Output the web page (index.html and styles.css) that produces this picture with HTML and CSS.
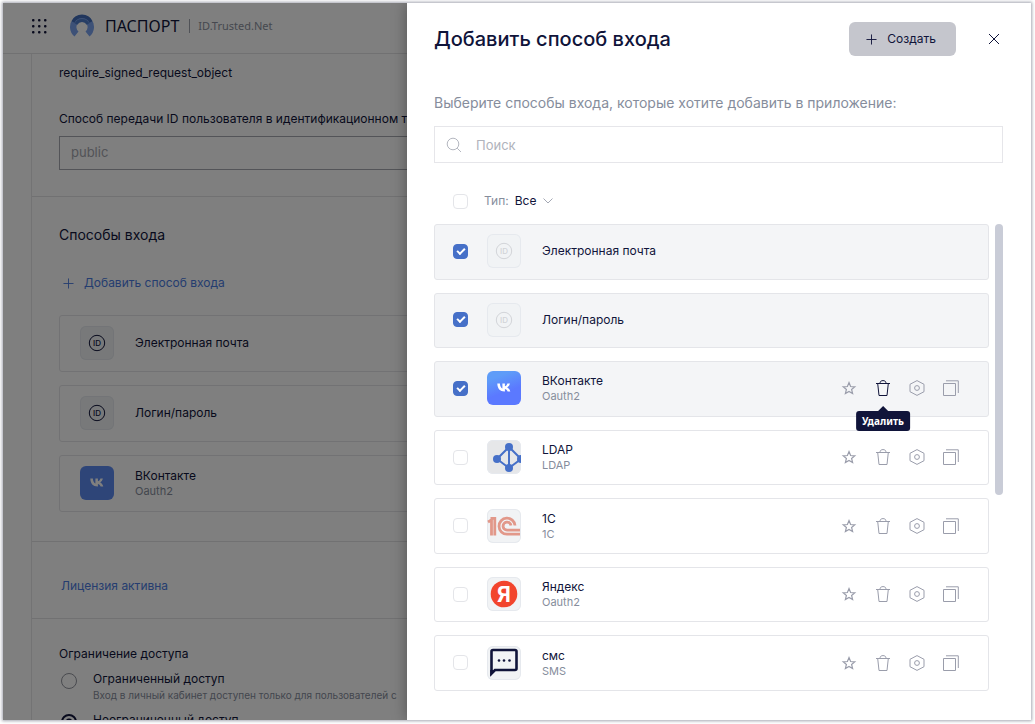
FILE: index.html
```html
<!DOCTYPE html>
<html lang="ru">
<head>
<meta charset="utf-8">
<title>Паспорт — способы входа</title>
<link rel="stylesheet" href="styles.css">
</head>
<body>
<svg class="sprite" aria-hidden="true">
  <symbol id="star" viewBox="0 0 16 16"><path d="M8 2.600l1.600 3.900 4.200.3-3.200 2.700 1 4.100L8 11.400l-3.600 2.200 1-4.100-3.200-2.700 4.200-.3z" fill="none" stroke="currentColor" stroke-width="1.200"/></symbol>
  <symbol id="trash" viewBox="0 0 16 16"><path d="M1 3.500h14M2.700 3.500l1.300 12h8l1.300-12M5 3.500C5 1.500 6 .6 8 .6s3 .9 3 2.900" fill="none" stroke="currentColor"/></symbol>
  <symbol id="hex" viewBox="0 0 16 16"><path d="M8 .6l7 3.700v7.400l-7 3.700-7-3.700V4.300z" fill="none" stroke="currentColor"/><circle cx="8" cy="8" r="2.400" fill="none" stroke="currentColor"/></symbol>
  <symbol id="copy" viewBox="0 0 16 16"><path d="M.5 3.500h12v12H.5zM3 .8h12.300V13" fill="none" stroke="currentColor"/></symbol>
  <symbol id="plus" viewBox="0 0 12 12"><path d="M6 .5v11M.5 6h11" fill="none" stroke="currentColor"/></symbol>
  <symbol id="id" viewBox="0 0 34 34"><circle cx="17" cy="17" r="7.700" fill="none" stroke="currentColor"/><text x="17" y="20" text-anchor="middle" class="id-text">ID</text></symbol>
  <symbol id="vk" viewBox="0 0 34 34"><path d="M10.300 12.500h2.600c.1 3.200 1.500 4.600 2.500 4.900v-4.900h2.500v2.800c1-.1 2.100-1.400 2.500-2.800h2.500c-.4 1.900-1.700 3.300-2.700 3.900 1 .5 2.500 1.700 3.100 4.100h-2.700c-.5-1.500-1.600-2.500-2.700-2.600v2.600h-.4c-4.500 0-7.100-3-7.200-8z" fill="currentColor"/></symbol>
</svg>

<div class="window">
  <div class="page">
    <header class="topbar">
      <svg class="apps" viewBox="0 0 16 16"><g fill="currentColor"><rect x="1" y="1" width="2.500" height="2.500" rx="1"/><rect x="7" y="1" width="2.500" height="2.500" rx="1"/><rect x="13" y="1" width="2.500" height="2.500" rx="1"/><rect x="1" y="7" width="2.500" height="2.500" rx="1"/><rect x="7" y="7" width="2.500" height="2.500" rx="1"/><rect x="13" y="7" width="2.500" height="2.500" rx="1"/><rect x="1" y="13" width="2.500" height="2.500" rx="1"/><rect x="7" y="13" width="2.500" height="2.500" rx="1"/><rect x="13" y="13" width="2.500" height="2.500" rx="1"/></g></svg>
      <svg class="logo" viewBox="0 0 24 24" fill="none"><path d="M6.500 20A8.800 8.800 0 1 1 17.500 20" stroke="#7ba3ee" stroke-width="6.400"/><path d="M3 8A10 10 0 0 1 21 8" stroke="#426dba" stroke-width="3.500"/><path d="M6 10A6.800 6.800 0 0 1 18 10" stroke="#4f7cca" stroke-width="3"/></svg>
      <span class="brand">ПАСПОРТ</span>
      <span class="domain">ID.Trusted.Net</span>
    </header>
    <main class="content">
      <section class="block first">
        <p class="label">require_signed_request_object</p>
        <label class="label nowrap" for="transfer">Способ передачи ID пользователя в идентификационном токене</label>
        <input class="field" id="transfer" type="text" placeholder="public">
      </section>
      <section class="block methods">
        <h2>Способы входа</h2>
        <button class="add" type="button"><svg><use href="#plus"/></svg>Добавить способ входа</button>
        <div class="cards">
          <div class="card"><svg class="tile"><use href="#id"/></svg><span class="name">Электронная почта</span></div>
          <div class="card"><svg class="tile"><use href="#id"/></svg><span class="name">Логин/пароль</span></div>
          <div class="card"><svg class="tile vk flat"><use href="#vk"/></svg><span class="name">ВКонтакте<small>Oauth2</small></span></div>
        </div>
      </section>
      <section class="block license"><a href="#license">Лицензия активна</a></section>
      <section class="block access">
        <h3>Ограничение доступа</h3>
        <label class="choice"><input type="radio" name="access"><span>Ограниченный доступ<small>Вход в личный кабинет доступен только для пользователей с</small></span></label>
        <label class="choice"><input type="radio" name="access" checked><span>Неограниченный доступ</span></label>
      </section>
    </main>
  </div>

  <div class="backdrop">
    <aside class="drawer">
      <header class="head">
        <h1>Добавить способ входа</h1>
        <button class="create" type="button"><svg><use href="#plus"/></svg>Создать</button>
        <button class="close" type="button" aria-label="Закрыть"><svg viewBox="0 0 12 12"><path d="M1 1l10 10M11 1L1 11" stroke="currentColor"/></svg></button>
      </header>
      <p class="hint">Выберите способы входа, которые хотите добавить в приложение:</p>
      <div class="search">
        <svg viewBox="0 0 16 16" fill="none" stroke="currentColor"><circle cx="7" cy="7" r="5.800"/><path d="M11.200 11.200L15 15"/></svg>
        <input type="search" placeholder="Поиск" aria-label="Поиск">
      </div>
      <div class="filter">
        <input class="check" type="checkbox" aria-label="Выбрать все">
        <label for="type">Тип:</label>
        <select id="type"><option>Все</option></select>
        <svg viewBox="0 0 10 6"><path d="M.5.500L5 5 9.500.500" fill="none" stroke="currentColor"/></svg>
      </div>
      <div class="scroller">
        <ul class="list">
          <li class="row on"><input class="check" type="checkbox" id="m1" checked><svg class="tile off"><use href="#id"/></svg><label class="name" for="m1">Электронная почта</label></li>
          <li class="row on"><input class="check" type="checkbox" id="m2" checked><svg class="tile off"><use href="#id"/></svg><label class="name" for="m2">Логин/пароль</label></li>
          <li class="row on"><input class="check" type="checkbox" id="m3" checked><svg class="tile vk"><use href="#vk"/></svg><label class="name" for="m3">ВКонтакте<small>Oauth2</small></label>
            <div class="actions"><button type="button" aria-label="В избранное"><svg><use href="#star"/></svg></button><button class="active" type="button" aria-describedby="tip"><svg><use href="#trash"/></svg><span class="tip" id="tip" role="tooltip">Удалить</span></button><button type="button" aria-label="Настроить"><svg><use href="#hex"/></svg></button><button type="button" aria-label="Копировать"><svg><use href="#copy"/></svg></button></div></li>
          <li class="row"><input class="check" type="checkbox" id="m4"><svg class="tile ldap" viewBox="0 0 34 34"><g stroke="#4670c8" stroke-width="2" fill="none"><path d="M22 7L10 19l12 9 12-9z"/><path d="M22 7v21"/></g><g fill="#4670c8"><circle cx="22" cy="7" r="4"/><circle cx="10" cy="19" r="4"/><circle cx="22" cy="28" r="4"/><circle cx="34" cy="19" r="4"/></g></svg><label class="name" for="m4">LDAP<small>LDAP</small></label>
            <div class="actions"><button type="button" aria-label="В избранное"><svg><use href="#star"/></svg></button><button type="button" aria-label="Удалить"><svg><use href="#trash"/></svg></button><button type="button" aria-label="Настроить"><svg><use href="#hex"/></svg></button><button type="button" aria-label="Копировать"><svg><use href="#copy"/></svg></button></div></li>
          <li class="row"><input class="check" type="checkbox" id="m5"><svg class="tile" viewBox="0 0 34 34"><g fill="none" stroke="#e2988a" stroke-width="2.800"><path d="M1 13L4.500 11v15.500M3.500 9.300H7.800V26.500"/><path d="M28 16.500a8 8 0 1 0-8 8.700H33"/><path d="M24 16.500a4 4 0 1 0-4 4.700H33"/></g></svg><label class="name" for="m5">1С<small>1С</small></label>
            <div class="actions"><button type="button" aria-label="В избранное"><svg><use href="#star"/></svg></button><button type="button" aria-label="Удалить"><svg><use href="#trash"/></svg></button><button type="button" aria-label="Настроить"><svg><use href="#hex"/></svg></button><button type="button" aria-label="Копировать"><svg><use href="#copy"/></svg></button></div></li>
          <li class="row"><input class="check" type="checkbox" id="m6"><svg class="tile" viewBox="0 0 34 34"><circle cx="17" cy="17" r="13.300" fill="#f2452d"/><text x="17" y="25" text-anchor="middle" class="ya">Я</text></svg><label class="name" for="m6">Яндекс<small>Oauth2</small></label>
            <div class="actions"><button type="button" aria-label="В избранное"><svg><use href="#star"/></svg></button><button type="button" aria-label="Удалить"><svg><use href="#trash"/></svg></button><button type="button" aria-label="Настроить"><svg><use href="#hex"/></svg></button><button type="button" aria-label="Копировать"><svg><use href="#copy"/></svg></button></div></li>
          <li class="row"><input class="check" type="checkbox" id="m7"><svg class="tile" viewBox="0 0 34 34"><path d="M4.500 5.500q0-1.500 1.500-1.500h22q1.500 0 1.500 1.500v17q0 1.500-1.500 1.500H8l-3.500 3.500z" fill="none" stroke="#10143a" stroke-width="2.600"/><path d="M3.200 24h5l-5 6.500z" fill="#10143a"/><g fill="#10143a"><circle cx="12" cy="14.500" r="1.300"/><circle cx="17" cy="14.500" r="1.300"/><circle cx="22.500" cy="14.500" r="1.300"/></g></svg><label class="name" for="m7">смс<small>SMS</small></label>
            <div class="actions"><button type="button" aria-label="В избранное"><svg><use href="#star"/></svg></button><button type="button" aria-label="Удалить"><svg><use href="#trash"/></svg></button><button type="button" aria-label="Настроить"><svg><use href="#hex"/></svg></button><button type="button" aria-label="Копировать"><svg><use href="#copy"/></svg></button></div></li>
        </ul>
        <div class="track"><div class="thumb"></div></div>
      </div>
    </aside>
  </div>
</div>
</body>
</html>
```

FILE: styles.css
```css
*, *::before, *::after { box-sizing: border-box; }
body {
  margin: 0;
  height: 100vh;
  padding: 3px 4px 4px 3px;
  background: #fff;
  color: #10143a;
  font: 12px/16px Inter, "Noto Sans", sans-serif;
}
h1, h2, h3, p, ul { margin: 0; padding: 0; font-weight: 400; }
button, input, select { font: inherit; color: inherit; }
button { padding: 0; border: 0; background: none; }
a { color: #4a7be0; text-decoration: none; }
small { display: block; font-size: 11px; line-height: 14px; color: #868d9c; }
svg { display: block; flex: none; }
.sprite { display: none; }
.id-text { font: 500 8px Inter, sans-serif; fill: currentColor; }
.ya { font: 700 21px Inter, sans-serif; fill: #fff; }

.window {
  position: relative;
  height: 100%;
  overflow: hidden;
  box-shadow: 0 0 3px 1px #a4a6b0;
}
.page { background: #fff; }

.topbar {
  display: flex;
  align-items: center;
  height: 51px;
  padding: 0 0 4px 28px;
  border-bottom: 1px solid #e2e2e4;
}
.apps { width: 16px; height: 16px; }
.logo { width: 24px; height: 24px; margin: 0 11px 0 23px; }
.brand { font: 16px/20px "Noto Sans", sans-serif; }
.domain {
  margin-left: 10px;
  padding-left: 8px;
  border-left: 1px solid #a0a4ae;
  color: #8c919e;
  font: 11px/14px "Noto Sans", sans-serif;
}

.content { margin-left: 28px; border-left: 1px solid #e6e6e8; }
.block { padding-left: 27px; border-bottom: 1px solid #e2e2e4; }
.first { padding-top: 11px; padding-bottom: 26px; }
.label { display: block; }
.nowrap { margin-top: 30px; white-space: nowrap; }
.field {
  display: block;
  width: 100%;
  height: 34px;
  margin-top: 9px;
  padding: 0 11px 2px;
  border: 1px solid #a6a8b0;
  background: none;
  font-size: 13px;
}
.field::placeholder { color: #a4a6ae; opacity: 1; }
.methods { padding-top: 28px; padding-bottom: 29px; }
.methods h2 { font-size: 14px; line-height: 20px; }
.add {
  display: flex;
  align-items: center;
  gap: 10px;
  margin: 30px 0 24px 4px;
  color: #4a7be0;
}
.add svg { width: 11px; height: 11px; }
.cards { display: grid; gap: 13px; }
.card {
  display: flex;
  align-items: center;
  gap: 21px;
  height: 57px;
  padding: 0 0 2px 20px;
  border: 1px solid #e4e4e8;
  border-radius: 3px;
}
.license { padding: 36px 0 24px 29px; }
.access { padding-top: 27px; }
.access h3 { font-size: 12px; margin-bottom: 9px; }
.choice { display: flex; gap: 15px; padding-left: 2px; margin-bottom: 9px; white-space: nowrap; }
.choice small { font-size: 10px; line-height: 16px; }
.choice input {
  flex: none;
  appearance: none;
  width: 16px;
  height: 16px;
  margin: 2px 1px 0 0;
  border: 1px solid #92949e;
  border-radius: 50%;
}
.choice input:checked {
  border: 2px solid #10143a;
  background: radial-gradient(#10143a 3px, #fff 4px);
}

.tile {
  width: 34px;
  height: 34px;
  border-radius: 6px;
  background: #f1f3f5;
  box-shadow: inset 0 0 0 1px #e6e9ee;
}
.tile.off { color: #d2d4d8; }
.tile.vk { color: #fff; background: linear-gradient(160deg, #5e9cf8 20%, #5b79ff 60%); box-shadow: none; }
.tile.vk.flat { background: #5c8af0; }
.tile.ldap { background: #e6e7e9; }

.backdrop {
  position: absolute;
  inset: 0;
  display: flex;
  justify-content: flex-end;
  background: rgba(0, 0, 0, .5);
}
.drawer {
  display: flex;
  flex-direction: column;
  width: 624px;
  padding: 19px 28px 29px 27px;
  background: #fff;
  box-shadow: 0 0 14px rgba(0, 0, 0, .35);
}
.head { display: flex; align-items: center; height: 34px; }
h1 { flex: 1; font-size: 20px; line-height: 24px; font-weight: 500; }
.create {
  display: flex;
  align-items: center;
  gap: 10px;
  height: 34px;
  padding: 0 20px 0 17px;
  border-radius: 6px;
  background: #c5c6cd;
}
.create svg { width: 11px; height: 11px; }
.close { display: grid; place-items: center; width: 18px; height: 20px; margin-left: 29px; }
.close svg { width: 12px; height: 12px; }
.hint { margin-top: 38px; font-size: 14px; line-height: 18px; color: #868d9c; }
.search {
  display: flex;
  align-items: center;
  gap: 14px;
  height: 37px;
  margin-top: 14px;
  padding-left: 11px;
  border: 1px solid #e6e6ea;
  color: #b4b7c0;
}
.search svg { width: 16px; height: 16px; }
.search input { flex: 1; border: 0; padding: 0; background: none; outline: 0; font-size: 13px; }
.search input::placeholder { color: #b0b3bc; opacity: 1; }
.filter {
  display: flex;
  align-items: center;
  height: 18px;
  margin: 29px 0 14px;
  padding-left: 19px;
}
.filter label { margin-left: 16px; color: #868d9c; }
.filter select { appearance: none; margin: 0 6px; padding: 0; border: 0; background: none; }
.filter svg { width: 10px; height: 6px; color: #a4a8b4; }
.check {
  display: grid;
  place-items: center;
  flex: none;
  appearance: none;
  width: 15px;
  height: 15px;
  margin: 0;
  border: 1px solid #e4e5e9;
  border-radius: 4px;
  background: #fff;
}
.check:checked { border-color: #4670c8; background: #4670c8; }
.check:checked::after {
  content: "";
  width: 8px;
  height: 5px;
  margin-bottom: 2px;
  border: solid #fff;
  border-width: 0 0 2px 2px;
  transform: rotate(-45deg);
}

.scroller { flex: 1; display: flex; gap: 6px; min-height: 0; }
.list { flex: 1; display: flex; flex-direction: column; gap: 13px; list-style: none; }
.row {
  flex: 1;
  display: flex;
  align-items: center;
  padding: 0 29px 1px 18px;
  border: 1px solid #e4e5e9;
  border-radius: 3px;
}
.row.on { background: #f4f5f7; }
.row .tile { margin: 0 21px 0 19px; }
.actions { display: flex; gap: 18px; margin-left: auto; color: #9a9dab; }
.actions button { position: relative; width: 16px; height: 16px; }
.actions svg { width: 16px; height: 16px; }
.actions .active { color: #10143a; }
.tip {
  position: absolute;
  top: 31px;
  left: 50%;
  transform: translateX(-50%);
  padding: 2px 6px;
  border-radius: 3px;
  background: #10143a;
  color: #fff;
  font: 700 10px/16px "Noto Sans", sans-serif;
}
.tip::before {
  content: "";
  position: absolute;
  top: -5px;
  left: 50%;
  margin-left: -5px;
  border: solid transparent;
  border-width: 0 5px 5px;
  border-bottom-color: #10143a;
}
.track { width: 8px; }
.thumb { height: 58%; border-radius: 4px; background: #c9ccd7; }
```
